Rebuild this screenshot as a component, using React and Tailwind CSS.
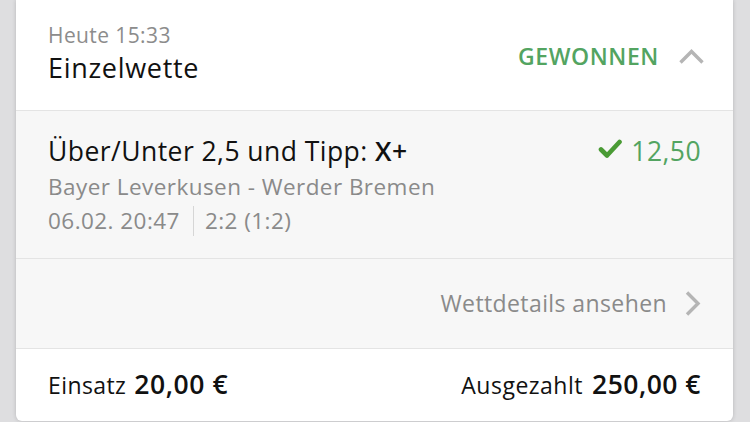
import React from "react";

const font = { fontFamily: '"Open Sans", "Noto Sans", sans-serif' };

const Check = () => (
  <svg width="24" height="20" viewBox="0 0 24 20" className="mr-[9px] mb-[4px]">
    <path d="M3 10.5 L9 16.5 L21.5 3" fill="none" stroke="#4a9b35" strokeWidth="4.6" strokeLinecap="round" strokeLinejoin="round" />
  </svg>
);

const ChevronUp = () => (
  <svg width="25" height="16" viewBox="0 0 25 16">
    <path d="M1.5 14.5 L12.5 3.5 L23.5 14.5" fill="none" stroke="#b5b5b5" strokeWidth="3.4" />
  </svg>
);

const ChevronRight = () => (
  <svg width="16" height="25" viewBox="0 0 16 25">
    <path d="M2 1.5 L13 12.5 L2 23.5" fill="none" stroke="#b5b5b5" strokeWidth="3.4" />
  </svg>
);

export default function App() {
  return (
    <div className="w-[750px] h-[422px] bg-[#dedee0] overflow-hidden" style={font}>
      <div className="ml-4 w-[717px] h-[421px] bg-white rounded-b-md shadow-[0_0_4px_rgba(0,0,0,0.18)] flex flex-col">
        <div className="h-[111px] pl-8 pr-[29px] flex items-start justify-between border-b border-[#e4e4e4]">
          <div className="flex flex-col pt-[21px]">
            <span className="text-[21px] leading-[28px] tracking-[0.4px] text-[#8c8c8c]">Heute 15:33</span>
            <span className="mt-[2px] text-[27px] leading-[34px] tracking-[0.7px] text-[#111]">Einzelwette</span>
          </div>
          <div className="flex items-center gap-[20px] mt-[39px]">
            <span className="text-[23px] leading-[34px] font-semibold tracking-[0.6px] text-[#53a461]">GEWONNEN</span>
            <ChevronUp />
          </div>
        </div>
        <div className="h-[148px] px-8 pt-[23px] bg-[#f7f7f7] border-b border-[#e4e4e4] flex justify-between">
          <div className="flex flex-col">
            <span className="text-[26.5px] leading-[34px] tracking-[0.45px] text-[#111]">
              Über/Unter 2,5 und Tipp: <span className="font-semibold">X+</span>
            </span>
            <span className="text-[22.5px] leading-[38px] tracking-[0.45px] text-[#8a8a8a]">Bayer Leverkusen - Werder Bremen</span>
            <div className="flex items-center text-[22.5px] leading-[30px] tracking-[0.45px] text-[#8a8a8a]">
              <span>06.02. 20:47</span>
              <span className="ml-[13px] mr-[11px] w-px h-[30px] bg-[#d6d6d6]"></span>
              <span>2:2 (1:2)</span>
            </div>
          </div>
          <div className="flex items-start">
            <div className="flex items-center h-[34px]">
              <Check />
              <span className="text-[26.5px] leading-[34px] tracking-[0.45px] text-[#53a461]">12,50</span>
            </div>
          </div>
        </div>
        <div className="h-[90px] px-8 bg-[#f7f7f7] border-b border-[#e4e4e4] flex items-center justify-end gap-[18px]">
          <span className="text-[23px] tracking-[0.4px] text-[#8a8a8a]">Wettdetails ansehen</span>
          <ChevronRight />
        </div>
        <div className="flex-1 px-8 flex items-center justify-between">
          <div className="flex items-baseline gap-[8px] text-[#111]">
            <span className="text-[23px] tracking-[0.4px]">Einsatz</span>
            <span className="text-[26.5px] font-semibold tracking-[0.6px]">20,00 €</span>
          </div>
          <div className="flex items-baseline gap-[9px] text-[#111]">
            <span className="text-[23px] tracking-[0.5px]">Ausgezahlt</span>
            <span className="text-[26.5px] font-semibold tracking-[0.5px]">250,00 €</span>
          </div>
        </div>
      </div>
    </div>
  );
}
